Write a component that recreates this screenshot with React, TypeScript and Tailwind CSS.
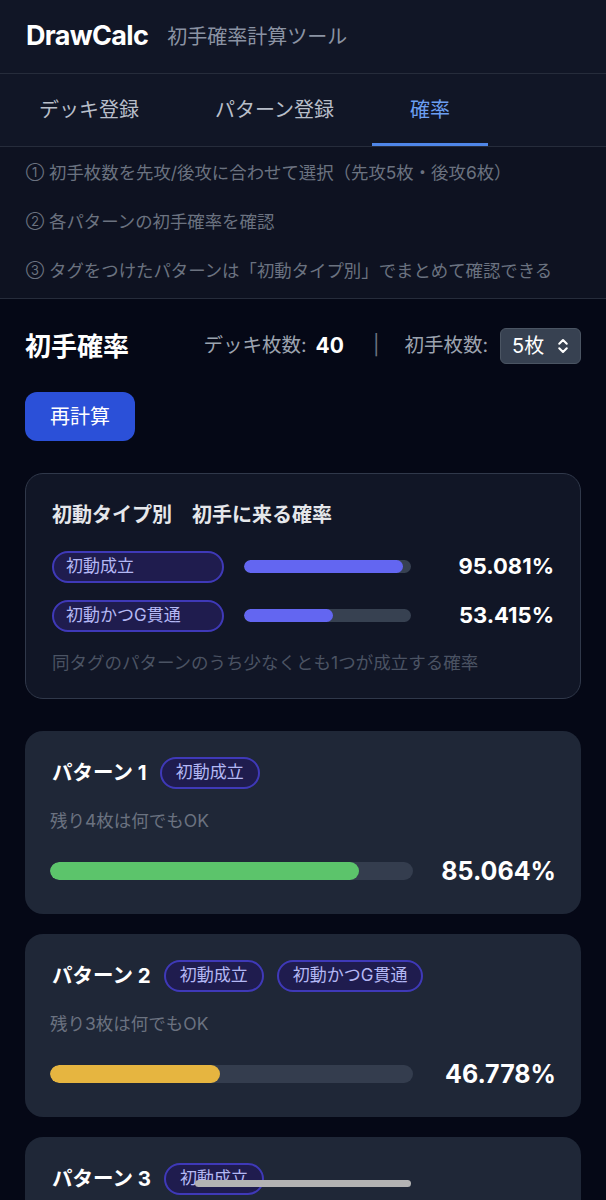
import { ChevronsUpDown } from "lucide-react"

const font = { fontFamily: 'Inter, "Noto Sans CJK JP", sans-serif' }

interface TagProps {
  label: string
  wide?: boolean
}

function Tag({ label, wide }: TagProps) {
  return (
    <span
      className={`inline-flex h-[32px] items-center rounded-full border-2 border-[#3f39b8] bg-[#1f1c4e] text-[17px] text-[#b4b8f4] ${
        wide ? "w-[172px] px-[12px]" : "px-[14px]"
      }`}
    >
      {label}
    </span>
  )
}

const tabs = ["デッキ登録", "パターン登録", "確率"]

const steps = [
  "初手枚数を先攻/後攻に合わせて選択（先攻5枚・後攻6枚）",
  "各パターンの初手確率を確認",
  "タグをつけたパターンは「初動タイプ別」でまとめて確認できる",
]

const summary = [
  { tag: "初動成立", value: 95.081 },
  { tag: "初動かつG貫通", value: 53.415 },
]

const patterns = [
  { name: "パターン 1", tags: ["初動成立"], note: "残り4枚は何でもOK", value: 85.064, color: "bg-[#5cc46b]" },
  { name: "パターン 2", tags: ["初動成立", "初動かつG貫通"], note: "残り3枚は何でもOK", value: 46.778, color: "bg-[#e6b540]" },
  { name: "パターン 3", tags: ["初動成立"], note: "残り4枚は何でもOK", value: 41.203, color: "bg-[#e6b540]" },
]

export default function App() {
  return (
    <div className="min-h-screen bg-[#050816] text-white" style={font}>
      {/* Header */}
      <header className="flex h-[74px] items-center gap-[19px] border-b border-[#262c3b] bg-[#111626] px-[26px]">
        <h1 className="text-[27px] font-bold tracking-tight text-white">DrawCalc</h1>
        <span className="text-[20px] text-[#8b93a3]">初手確率計算ツール</span>
      </header>

      {/* Tabs */}
      <nav className="flex h-[73px] border-b border-[#262c3b] bg-[#111626] pl-[1px]">
        {tabs.map((tab, i) => (
          <button
            key={tab}
            className={`flex items-center px-[38px] pt-[3px] text-[20px] ${
              i === 2
                ? "border-b-[3px] border-[#4f86e8] text-[#6c9ff2]"
                : "border-b-[3px] border-transparent text-[#b8bec9]"
            }`}
          >
            {tab}
          </button>
        ))}
      </nav>

      {/* Steps */}
      <ol className="flex flex-col gap-[25px] border-b border-[#262c3b] bg-[#0e1221] px-[26px] pt-[14px] pb-[15px]">
        {steps.map((step, i) => (
          <li key={step} className="flex h-[24px] items-center gap-[5px] text-[17.4px] text-[#6b7280]">
            <span className="text-[13px]">{["①", "②", "③"][i]}</span>
            <span>{step}</span>
          </li>
        ))}
      </ol>

      <main className="px-[25px] pt-[29px] pb-[40px]">
        {/* Title row */}
        <div className="flex h-[36px] items-center justify-between">
          <h2 className="text-[26px] font-bold text-white">初手確率</h2>
          <div className="flex items-center text-[19.5px] text-[#9ca3af]">
            <span>デッキ枚数:</span>
            <span className="ml-[9px] text-[21px] font-bold text-white">40</span>
            <span className="mr-[25px] ml-[29px] text-[#6b7280]">|</span>
            <span>初手枚数:</span>
            <div className="ml-[12px] flex h-[36px] w-[81px] items-center justify-between rounded-md border border-[#4b5563] bg-[#374151] pl-[11px] pr-[8px] text-[20px] text-white">
              <span>5枚</span>
              <ChevronsUpDown className="h-[18px] w-[18px]" strokeWidth={2.75} />
            </div>
          </div>
        </div>

        <button className="mt-[28px] h-[49px] w-[110px] rounded-[12px] bg-[#2b50d8] text-[20px] text-white">
          再計算
        </button>

        {/* Summary */}
        <section className="mt-[32px] rounded-[18px] border border-[#30384a] bg-[#111626] px-[26px] pt-[29px] pb-[23px]">
          <h3 className="h-[24px] text-[20px] leading-[24px] font-bold text-[#e5e7eb]">初動タイプ別　初手に来る確率</h3>
          <div className="mt-[23px] flex flex-col gap-[16px]">
            {summary.map((row) => (
              <div key={row.tag} className="flex items-center">
                <Tag label={row.tag} wide />
                <div className="ml-[20px] h-[13px] w-[167px] overflow-hidden rounded-full bg-[#374151]">
                  <div className="h-full rounded-full bg-[#6366f1]" style={{ width: `${row.value}%` }} />
                </div>
                <span className="flex-1 text-right text-[22px] font-bold text-white">{row.value.toFixed(3)}%</span>
              </div>
            ))}
          </div>
          <p className="mt-[19px] text-[17.5px] leading-[24px] text-[#4b5363]">
            同タグのパターンのうち少なくとも1つが成立する確率
          </p>
        </section>

        {/* Patterns */}
        <div className="mt-[32px] flex flex-col gap-[20px]">
          {patterns.map((p) => (
            <section key={p.name} className="rounded-[18px] bg-[#1f2737] px-[25px] pt-[26px] pb-[27px]">
              <div className="flex items-center">
                <h4 className="ml-[2px] text-[20.5px] font-bold text-white">{p.name}</h4>
                <div className="ml-[13px] flex gap-[13px]">
                  {p.tags.map((t) => (
                    <Tag key={t} label={t} />
                  ))}
                </div>
              </div>
              <p className="mt-[20px] text-[17.5px] leading-[24px] text-[#6b7280]">{p.note}</p>
              <div className="mt-[22px] flex items-center">
                <div className="h-[18px] w-[363px] overflow-hidden rounded-full bg-[#343d4e]">
                  <div className={`h-full rounded-full ${p.color}`} style={{ width: `${p.value}%` }} />
                </div>
                <span className="flex-1 text-right text-[25px] leading-[32px] font-bold text-white">
                  {p.value.toFixed(3)}%
                </span>
              </div>
            </section>
          ))}
        </div>
      </main>

      <div className="fixed bottom-[13px] left-1/2 h-[7px] w-[216px] -translate-x-1/2 rounded-full bg-[#b3b3b3]" />
    </div>
  )
}
